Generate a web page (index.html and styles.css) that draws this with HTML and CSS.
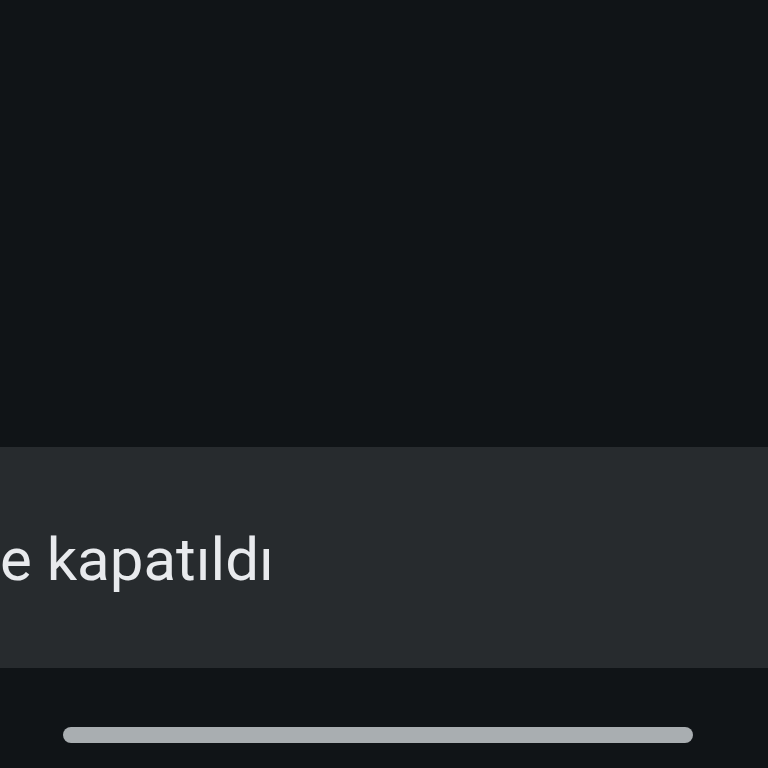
FILE: index.html
```html
<!DOCTYPE html>
<html lang="tr">
<head>
<meta charset="utf-8">
<link rel="stylesheet" href="styles.css">
</head>
<body>
<div class="screen">
  <div class="top"></div>
  <div class="snackbar"><span class="msg">e kapatıldı</span></div>
  <div class="nav"><div class="handle"></div></div>
</div>
</body>
</html>
```
FILE: styles.css
```css
html, body {
  margin: 0;
  padding: 0;
  background: #101417;
}
.screen {
  width: 768px;
  height: 768px;
  display: flex;
  flex-direction: column;
  overflow: hidden;
}
.top {
  height: 447px;
  background: #101417;
}
.snackbar {
  height: 221px;
  background: #272b2e;
  display: flex;
  align-items: center;
}
.msg {
  font-family: Roboto, "Noto Sans", sans-serif;
  font-size: 60px;
  line-height: 60px;
  color: #e8eaed;
  padding-top: 4px;
}
.nav {
  flex: 1;
  background: #101417;
  display: flex;
  justify-content: flex-start;
  padding: 59px 0 0 63px;
  box-sizing: border-box;
}
.handle {
  width: 630px;
  height: 16px;
  border-radius: 8px;
  background: #a9aeb1;
}
```
